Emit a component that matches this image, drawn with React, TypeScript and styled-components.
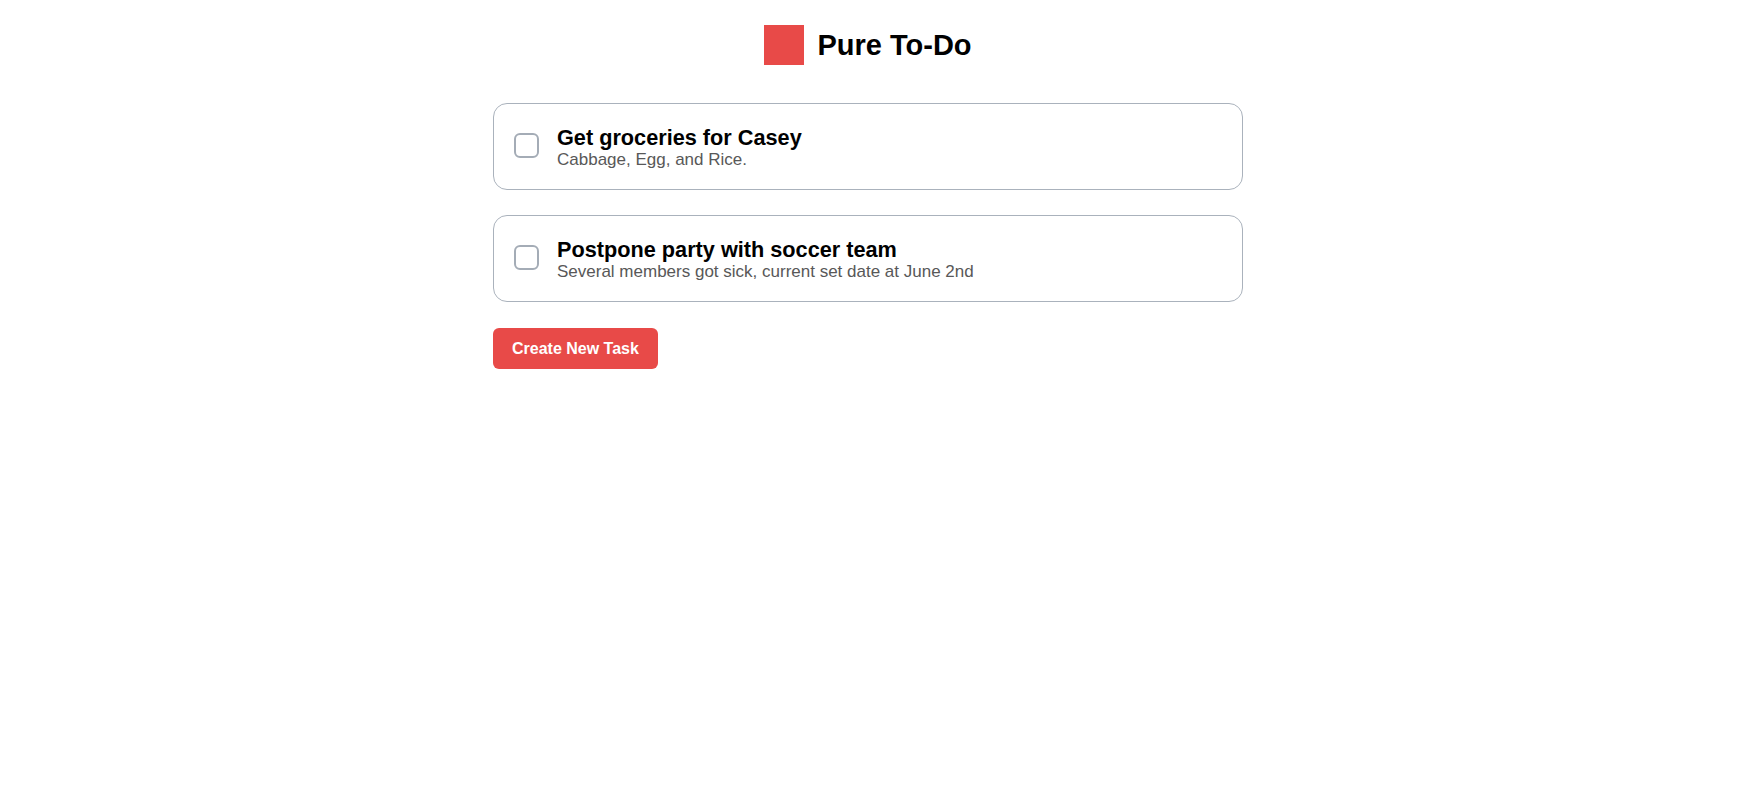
import React from "react";
import styled, { createGlobalStyle } from "styled-components";

const GlobalStyle = createGlobalStyle`
  html, body {
    margin: 0;
    padding: 0;
    background: #ffffff;
    font-family: "Liberation Sans", Arial, Helvetica, sans-serif;
  }
`;

const Page = styled.div`
  display: flex;
  justify-content: center;
  padding: 25px 16px 0 0;
`;

const Column = styled.main`
  width: 750px;
  display: flex;
  flex-direction: column;
`;

const Header = styled.header`
  display: flex;
  align-items: center;
  justify-content: center;
  gap: 13px;
  margin-bottom: 38px;
`;

const Logo = styled.div`
  width: 40px;
  height: 40px;
  background: #e84a48;
`;

const Title = styled.h1`
  margin: 0;
  font-size: 29px;
  font-weight: 700;
  color: #000;
`;

const TaskList = styled.ul`
  list-style: none;
  margin: 0;
  padding: 0;
  display: flex;
  flex-direction: column;
  gap: 25px;
`;

const TaskCard = styled.li`
  display: flex;
  align-items: center;
  gap: 18px;
  padding: 0 20px;
  border: 1px solid #aab2bc;
  border-radius: 14px;
  box-sizing: border-box;
  height: 87px;
`;

const Checkbox = styled.span`
  width: 25px;
  height: 25px;
  box-sizing: border-box;
  border: 2px solid #a4acb6;
  border-radius: 6px;
  flex-shrink: 0;
  margin-bottom: 2px;
`;

const TaskText = styled.div`
  display: flex;
  flex-direction: column;
`;

const TaskTitle = styled.div`
  font-size: 21.7px;
  font-weight: 700;
  color: #000;
  line-height: 25px;
`;

const TaskNote = styled.div`
  font-size: 17px;
  color: #585858;
  line-height: 19px;
`;

const CreateButton = styled.button`
  align-self: flex-start;
  margin-top: 26px;
  height: 41px;
  padding: 0 19px;
  border: none;
  border-radius: 6px;
  background: #e84a48;
  color: #fff;
  font-family: "Liberation Sans", Arial, Helvetica, sans-serif;
  font-size: 16px;
  font-weight: 700;
  cursor: pointer;
`;

const tasks = [
  { title: "Get groceries for Casey", note: "Cabbage, Egg, and Rice." },
  {
    title: "Postpone party with soccer team",
    note: "Several members got sick, current set date at June 2nd",
  },
];

export default function App() {
  return (
    <>
      <GlobalStyle />
      <Page>
        <Column>
          <Header>
            <Logo />
            <Title>Pure To-Do</Title>
          </Header>
          <TaskList>
            {tasks.map((t) => (
              <TaskCard key={t.title}>
                <Checkbox />
                <TaskText>
                  <TaskTitle>{t.title}</TaskTitle>
                  <TaskNote>{t.note}</TaskNote>
                </TaskText>
              </TaskCard>
            ))}
          </TaskList>
          <CreateButton>Create New Task</CreateButton>
        </Column>
      </Page>
    </>
  );
}
